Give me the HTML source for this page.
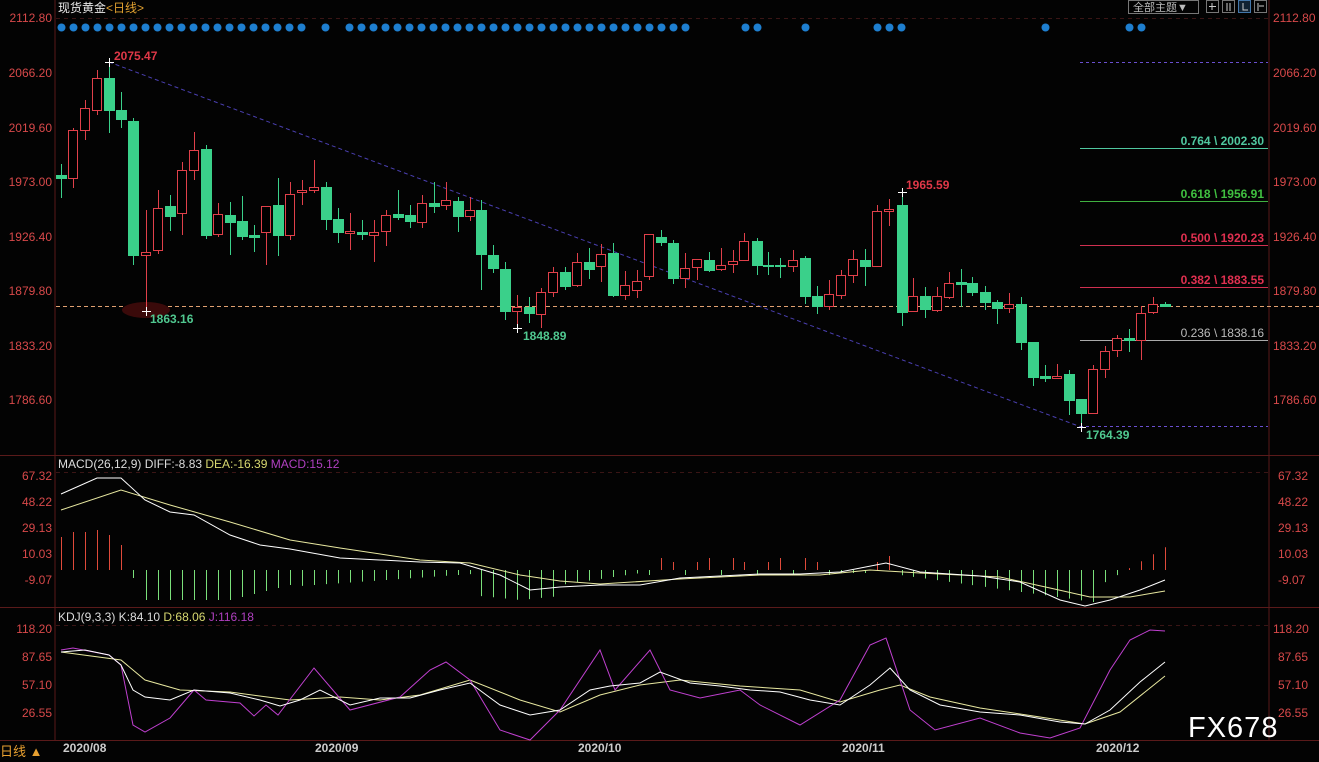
<!DOCTYPE html>
<html><head><meta charset="utf-8">
<style>
html,body{margin:0;padding:0;background:#000;}
body{width:1319px;height:762px;overflow:hidden;position:relative;font-family:"Liberation Sans","Noto Sans CJK SC",sans-serif;}
svg{position:absolute;left:0;top:0;}
text{font-family:"Liberation Sans","Noto Sans CJK SC",sans-serif;}
.ax{fill:#d8494a;font-size:12px;}
</style></head><body>
<svg id="s" width="1319" height="762" xmlns="http://www.w3.org/2000/svg">
<rect width="1319" height="762" fill="#030303"/>
<!-- frames -->
<line x1="55" y1="0" x2="55" y2="740" stroke="#5a1a1a" stroke-width="1"/>
<line x1="1269" y1="0" x2="1269" y2="740" stroke="#5a1a1a" stroke-width="1"/>
<line x1="0" y1="455.5" x2="1319" y2="455.5" stroke="#5a1a1a"/>
<line x1="0" y1="607.5" x2="1319" y2="607.5" stroke="#5a1a1a"/>
<line x1="0" y1="740.5" x2="1319" y2="740.5" stroke="#5a1a1a"/>
<line x1="56" y1="18.5" x2="1268" y2="18.5" stroke="#3a1515" stroke-dasharray="4 4"/>
<line x1="56" y1="472.5" x2="1268" y2="472.5" stroke="#3a1515" stroke-dasharray="4 4"/>
<line x1="56" y1="625.5" x2="1268" y2="625.5" stroke="#3a1515" stroke-dasharray="4 4"/>
<!-- title -->
<text x="58" y="12" fill="#e8e8e8" font-size="12">现货黄金<tspan fill="#e0a030">&lt;日线&gt;</tspan></text>
<!-- top right buttons -->
<rect x="1128.5" y="0.5" width="70" height="13" fill="none" stroke="#777"/>
<text x="1133" y="11" fill="#bbb" font-size="11">全部主题▼</text>
<rect x="1206.5" y="0.5" width="12" height="12" fill="none" stroke="#777"/>
<rect x="1222.5" y="0.5" width="12" height="12" fill="none" stroke="#777"/>
<rect x="1238.5" y="0.5" width="12" height="12" fill="#123" stroke="#47a"/>
<rect x="1254.5" y="0.5" width="12" height="12" fill="none" stroke="#777"/>
<path d="M1212 3v7M1209 6.5h7M1227 3v8M1230 3v8M1243 3v7h5M1258 3v8M1259 6h5" stroke="#ccc" stroke-width="1" fill="none"/>
<!-- axis labels -->
<g class="ax" text-anchor="end">
<text x="52" y="22">2112.80</text><text x="52" y="77">2066.20</text><text x="52" y="132">2019.60</text><text x="52" y="186">1973.00</text><text x="52" y="241">1926.40</text><text x="52" y="295">1879.80</text><text x="52" y="350">1833.20</text><text x="52" y="404">1786.60</text>
<text x="52" y="480">67.32</text><text x="52" y="506">48.22</text><text x="52" y="532">29.13</text><text x="52" y="558">10.03</text><text x="52" y="584">-9.07</text>
<text x="52" y="633">118.20</text><text x="52" y="661">87.65</text><text x="52" y="689">57.10</text><text x="52" y="717">26.55</text>
</g>
<g class="ax">
<text x="1273" y="22">2112.80</text><text x="1273" y="77">2066.20</text><text x="1273" y="132">2019.60</text><text x="1273" y="186">1973.00</text><text x="1273" y="241">1926.40</text><text x="1273" y="295">1879.80</text><text x="1273" y="350">1833.20</text><text x="1273" y="404">1786.60</text>
<text x="1278" y="480">67.32</text><text x="1278" y="506">48.22</text><text x="1278" y="532">29.13</text><text x="1278" y="558">10.03</text><text x="1278" y="584">-9.07</text>
<text x="1273" y="633">118.20</text><text x="1278" y="661">87.65</text><text x="1278" y="689">57.10</text><text x="1278" y="717">26.55</text>
</g>
<!-- trend & fib -->
<line x1="109" y1="62" x2="1081" y2="427" stroke="#4a3fb0" stroke-dasharray="4 3"/>
<line x1="56" y1="306.5" x2="1319" y2="306.5" stroke="#e0a070" stroke-dasharray="4 3"/>
<ellipse cx="146" cy="310" rx="24" ry="8" fill="#3a0a0a"/>
<line x1="1080" y1="62.5" x2="1268" y2="62.5" stroke="#6a4fd0" stroke-dasharray="3 3"/>
<line x1="1080" y1="426.5" x2="1268" y2="426.5" stroke="#6a4fd0" stroke-dasharray="3 3"/>
<line x1="1080" y1="148.5" x2="1268" y2="148.5" stroke="#50c8a0"/>
<line x1="1080" y1="201.5" x2="1268" y2="201.5" stroke="#40b040"/>
<line x1="1080" y1="245.5" x2="1268" y2="245.5" stroke="#d03050"/>
<line x1="1080" y1="287.5" x2="1268" y2="287.5" stroke="#d03050"/>
<line x1="1080" y1="340.5" x2="1268" y2="340.5" stroke="#aaa"/>
<g font-size="12" font-weight="bold" text-anchor="end">
<text x="1264" y="145" fill="#50c8a0">0.764 \ 2002.30</text>
<text x="1264" y="198" fill="#40c040">0.618 \ 1956.91</text>
<text x="1264" y="242" fill="#e03050">0.500 \ 1920.23</text>
<text x="1264" y="284" fill="#e03050">0.382 \ 1883.55</text>
<text x="1264" y="337" fill="#bbb" font-weight="normal">0.236 \ 1838.16</text>
</g>
<g font-size="12" font-weight="bold">
<text x="114" y="60" fill="#e03848">2075.47</text>
<text x="150" y="323" fill="#50c890">1863.16</text>
<text x="523" y="340" fill="#50c890">1848.89</text>
<text x="906" y="189" fill="#e03848">1965.59</text>
<text x="1086" y="439" fill="#50c890">1764.39</text>
</g>
<g id="cand"></g>
<g id="dots" fill="#1e7fd0"></g>
<!-- MACD -->
<text x="58" y="468" fill="#ddd" font-size="12">MACD(26,12,9) DIFF:-8.83 <tspan fill="#d8d870">DEA:-16.39</tspan> <tspan fill="#b040c0">MACD:15.12</tspan></text>
<g id="hist"></g>
<polyline fill="none" stroke="#e8e8a0" stroke-width="1" points="61,510 121,490 170,505 230,522 290,540 340,548 420,560 470,563 520,575 560,581 600,584 680,579 760,575 820,575 870,570 920,573 1000,577 1050,588 1090,597 1130,597 1165,591"/>
<polyline fill="none" stroke="#fff" stroke-width="1" points="61,494 97,478 121,478 145,500 170,512 194,515 230,535 260,545 290,549 340,558 420,562 460,563 500,575 530,590 560,587 600,585 640,585 680,578 760,574 800,574 840,572 886,563 920,572 980,576 1020,582 1060,600 1085,606 1110,600 1140,590 1165,580"/>
<!-- KDJ -->
<text x="58" y="621" fill="#ddd" font-size="12">KDJ(9,3,3) K:84.10 <tspan fill="#d8d870">D:68.06</tspan> <tspan fill="#b040c0">J:116.18</tspan></text>
<polyline fill="none" stroke="#e8e8a0" points="61,652 121,660 145,680 180,690 230,692 290,700 340,697 380,700 420,695 470,680 520,700 560,712 600,695 640,685 680,680 740,686 800,690 840,702 880,690 900,685 930,697 980,708 1040,717 1085,724 1120,712 1165,676"/>
<polyline fill="none" stroke="#c040d0" points="61,650 73,648 109,655 121,665 133,725 145,732 170,718 194,690 206,700 240,703 254,716 266,705 278,715 314,668 350,710 400,697 430,670 446,662 470,680 500,730 530,740 560,710 600,650 615,690 650,650 670,690 700,698 740,690 760,705 800,725 840,700 870,645 886,638 910,710 935,730 980,718 1020,733 1050,738 1080,728 1110,670 1130,640 1150,630 1165,631"/>
<polyline fill="none" stroke="#fff" points="61,652 85,650 109,655 121,665 133,690 145,697 170,700 194,690 230,693 260,700 280,706 300,700 320,690 350,705 380,698 410,698 440,690 470,683 500,705 530,715 560,710 590,690 610,686 640,683 660,672 690,683 720,686 750,690 780,692 810,700 840,705 870,685 890,668 910,690 940,705 980,712 1020,715 1060,722 1085,724 1110,710 1140,682 1165,662"/>
<!-- bottom -->
<text x="0" y="756" fill="#e8a030" font-size="13">日线 ▲</text>
<g fill="#ccc" font-size="12" font-weight="bold">
<text x="63" y="752">2020/08</text><text x="315" y="752">2020/09</text><text x="578" y="752">2020/10</text><text x="842" y="752">2020/11</text><text x="1096" y="752">2020/12</text>
</g>
<text x="1188" y="737" fill="#fff" font-size="29" letter-spacing="1">FX678</text>
</svg>
<script>
var NS="http://www.w3.org/2000/svg";
function el(p,t,a){var e=document.createElementNS(NS,t);for(var k in a)e.setAttribute(k,a[k]);p.appendChild(e);return e;}
// x, bodyTop, bodyBot, wickTop, wickBot, red?
var C=[[61,175,178,164,198,0],[73,130,178,128,188,1],[85,108,130,100,140,1],[97,78,110,70,115,1],[109,78,110,62,133,0],[121,110,119,92,128,0],[133,121,255,118,265,0],[146,252,255,210,312,1],[158,208,250,190,254,1],[170,206,216,195,231,0],[182,170,213,162,235,1],[194,150,170,132,180,1],[206,149,235,145,239,0],[218,214,234,203,237,1],[230,215,222,202,255,0],[242,221,236,196,240,0],[254,235,237,225,252,0],[266,206,232,206,265,1],[278,205,235,178,256,0],[290,194,235,182,240,1],[302,190,192,180,205,1],[314,187,190,160,193,1],[326,187,219,182,230,0],[338,219,232,208,243,0],[350,231,233,213,250,1],[362,232,234,220,240,0],[374,232,235,220,262,1],[386,215,231,210,246,1],[398,214,217,190,220,0],[410,215,221,205,228,0],[422,203,222,195,228,1],[434,203,206,182,213,0],[446,200,205,182,210,1],[458,201,216,197,232,0],[470,210,216,197,221,1],[481,210,254,200,290,0],[493,255,268,245,273,0],[505,269,311,262,320,0],[517,307,311,295,328,1],[529,307,313,297,323,0],[541,292,314,288,328,1],[553,272,292,267,297,1],[565,272,286,267,290,0],[577,262,285,253,287,1],[589,262,269,248,279,0],[601,254,266,244,282,1],[613,253,295,243,297,0],[625,285,295,271,300,1],[637,281,290,270,298,1],[649,234,276,234,280,1],[661,237,242,230,246,0],[673,243,278,240,284,0],[685,268,278,253,288,1],[697,259,267,259,280,1],[709,260,270,252,272,0],[721,265,269,248,271,1],[733,261,264,250,273,1],[744,241,260,233,260,1],[757,241,265,238,275,0],[768,265,266,252,275,0],[780,265,266,258,278,0],[793,260,266,250,272,1],[805,258,296,256,304,0],[817,296,306,286,314,0],[829,294,306,280,310,1],[841,275,295,270,299,1],[853,259,275,250,283,1],[865,260,266,249,286,0],[877,211,266,205,266,1],[889,209,211,199,226,1],[902,205,312,192,326,0],[913,296,311,278,312,1],[925,296,309,287,318,0],[937,296,310,287,312,1],[949,283,297,272,299,1],[961,282,284,269,307,0],[972,283,292,277,296,0],[985,292,302,286,310,0],[997,302,308,300,324,0],[1009,304,308,293,313,1],[1021,304,342,297,350,0],[1033,342,377,342,386,0],[1045,376,378,365,382,0],[1057,376,378,364,378,1],[1069,374,400,370,415,0],[1081,399,413,399,428,0],[1093,369,413,365,414,1],[1105,351,369,346,378,1],[1117,338,350,335,357,1],[1129,338,340,329,352,0],[1141,313,340,306,360,1],[1153,304,312,297,314,1],[1165,304,306,302,307,0]];
var g=document.getElementById("cand");
C.forEach(function(c){var col=c[5]?"#e0404a":"#3ad08a";
el(g,"line",{x1:c[0]+.5,x2:c[0]+.5,y1:c[3],y2:c[4],stroke:col});
var h=Math.max(c[2]-c[1],1);
if(c[5])el(g,"rect",{x:c[0]-4.5,y:c[1]+.5,width:9,height:h,fill:"#000",stroke:col});
else el(g,"rect",{x:c[0]-5,y:c[1],width:11,height:h+1,fill:col});});
// crosses
[[109,62],[146,311],[517,328],[902,192],[1081,427]].forEach(function(p){el(g,"path",{d:"M"+(p[0]-4)+" "+(p[1]+.5)+"h9M"+(p[0]+.5)+" "+(p[1]-4)+"v9",stroke:"#fff"});});
// dots
var d=document.getElementById("dots"),xs=[];
for(var x=61;x<=301;x+=12)xs.push(x);xs.push(325);for(x=349;x<=685;x+=12)xs.push(x);
xs=xs.concat([745,757,805,877,889,901,1045,1129,1141]);
xs.forEach(function(x){el(d,"circle",{cx:x+.5,cy:27.5,r:4});});
// hist
var H=document.getElementById("hist");
function hv(x){
 if(x<=121){return [537,532,532,530,535,545][Math.round((x-61)/12)];}
 if(x<=145)return 578+(x-133)*1.6;
 if(x<=300)return 600-(x>230?(x-230)*0.25:0);
 if(x<=470)return 586-(x-300)*0.07;
 if(x<=560)return 600-Math.abs(x-520)*0.1;
 if(x<=640)return 585-(x-560)*0.15;
 if(x<=830)return 558+ (x%24<12?4:0);
 if(x<=900)return 573-Math.max(0,20-Math.abs(x-886));
 if(x<=1100)return 575+ (x-900)*0.14;
 return 585-(x-1100)*0.58;}
C.forEach(function(c){var x=c[0],v=hv(x);if(x>640&&x<=830&&(x%36)<12)v=575;
var col=v<570?"#e04a3a":"#7ae07a";
el(H,"line",{x1:x+.5,x2:x+.5,y1:570,y2:v,stroke:col});});
</script>
</body></html>
